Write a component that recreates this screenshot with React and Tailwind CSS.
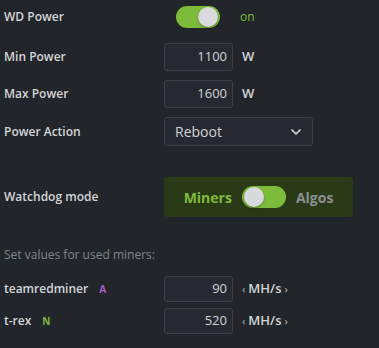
import React from 'react'
import { ChevronDown } from 'lucide-react'

const Toggle = ({ on }) => (
  <div className="relative w-[44px] h-[22px] rounded-full bg-[#7dbb3b] shrink-0">
    <div
      className={
        'absolute top-[1px] w-[20px] h-[20px] rounded-full bg-[#d9dade] shadow-[0_1px_2px_rgba(0,0,0,0.35)] ' +
        (on ? 'right-[2px]' : 'left-[2px]')
      }
    />
  </div>
)

const NumInput = ({ value, h = 'h-[28px]' }) => (
  <div className={`w-[69px] ${h} rounded-[3px] border border-[#3b3f46] bg-[#262a30] flex items-center justify-end pr-[5px] text-[13px] text-[#d2d4d8]`}>
    {value}
  </div>
)

const Label = ({ children }) => (
  <div className="w-[160px] shrink-0 text-[12px] font-semibold text-[#d3d5d8]">{children}</div>
)

export default function App() {
  return (
    <div className="w-[379px] h-[348px] bg-[#222529] pl-[4px] font-['Open_Sans',sans-serif] overflow-hidden">
      {/* WD Power */}
      <div className="flex items-center h-[34px]">
        <Label>WD Power</Label>
        <div className="ml-[12px]">
          <Toggle on />
        </div>
        <span className="ml-[20px] text-[12px] text-[#7dbb3b]">on</span>
      </div>

      <div className="flex items-center h-[28px] mt-[9px]">
        <Label>Min Power</Label>
        <NumInput value="1100" />
        <span className="ml-[9px] text-[13px] font-semibold text-[#d3d5d8]">W</span>
      </div>

      <div className="flex items-center h-[28px] mt-[9px]">
        <Label>Max Power</Label>
        <NumInput value="1600" />
        <span className="ml-[9px] text-[13px] font-semibold text-[#d3d5d8]">W</span>
      </div>

      <div className="flex items-center h-[29px] mt-[9px]">
        <Label>Power Action</Label>
        <div className="w-[149px] h-[29px] rounded-[3px] border border-[#3b3f46] bg-[#262a30] flex items-center justify-between pl-[10px] pr-[8px]">
          <span className="text-[14px] text-[#d2d4d8]">Reboot</span>
          <ChevronDown className="w-[16px] h-[16px] text-[#d2d4d8]" strokeWidth={2.6} />
        </div>
      </div>

      <div className="flex items-center h-[40px] mt-[31px]">
        <Label>Watchdog mode</Label>
        <div className="w-[189px] h-[40px] rounded-[3px] bg-[#2a3a16] flex items-center justify-center gap-[10px]">
          <span className="text-[14px] font-bold text-[#7dbb3b]">Miners</span>
          <Toggle on={false} />
          <span className="text-[14px] font-bold text-[#8a8f96]">Algos</span>
        </div>
      </div>

      <div className="mt-[29px] h-[18px] flex items-center text-[12px] text-[#80858c]">
        Set values for used miners:
      </div>

      <div className="flex items-center h-[26px] mt-[12px]">
        <div className="w-[160px] shrink-0 flex items-center text-[12px] font-semibold text-[#d3d5d8]">
          teamredminer
          <span className="ml-[11px] text-[10px] font-bold text-[#a45fc1]">A</span>
        </div>
        <NumInput value="90" h="h-[26px]" />
        <div className="ml-[9px] flex items-center gap-[3px] text-[13px] font-semibold text-[#d3d5d8]">
          <span className="text-[10px] text-[#9a9ea4]">‹</span>
          MH/s
          <span className="text-[10px] text-[#9a9ea4]">›</span>
        </div>
      </div>

      <div className="flex items-center h-[26px] mt-[6px]">
        <div className="w-[160px] shrink-0 flex items-center text-[12px] font-semibold text-[#d3d5d8]">
          t-rex
          <span className="ml-[11px] text-[10px] font-bold text-[#7dbb3b]">N</span>
        </div>
        <NumInput value="520" h="h-[26px]" />
        <div className="ml-[9px] flex items-center gap-[3px] text-[13px] font-semibold text-[#d3d5d8]">
          <span className="text-[10px] text-[#9a9ea4]">‹</span>
          MH/s
          <span className="text-[10px] text-[#9a9ea4]">›</span>
        </div>
      </div>
    </div>
  )
}
